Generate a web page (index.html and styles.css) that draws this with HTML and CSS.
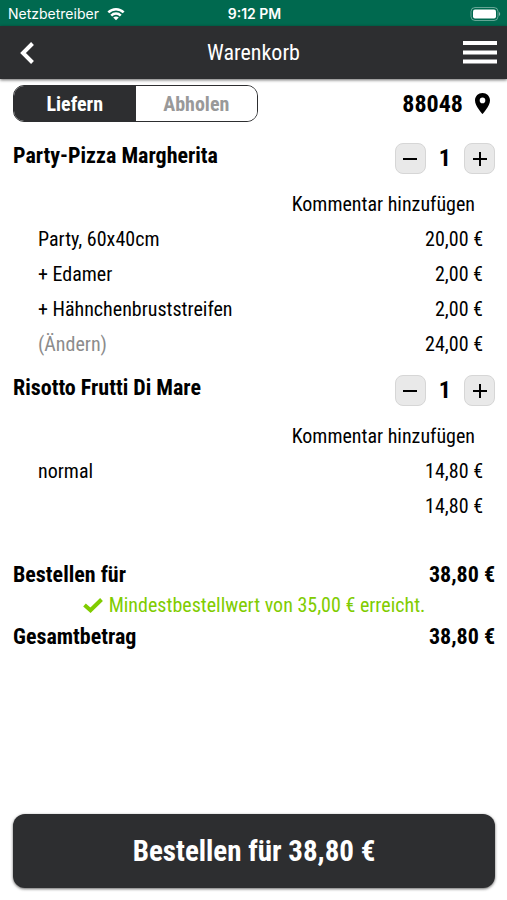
FILE: index.html
```html
<!DOCTYPE html>
<html lang="de">
<head>
    <meta charset="UTF-8">
    <meta name="viewport" content="width=device-width, initial-scale=1.0">
    <title>Warenkorb</title>
    <link rel="stylesheet" href="styles.css">
</head>
<body>
    <div class="statusbar">
        <div class="carrier">
            <span>Netzbetreiber</span>
            <svg width="18" height="14" viewBox="0 0 20 14" fill="none" stroke="#fff" stroke-width="2.8">
                <path d="M1.5 5.2C6.2.4 13.8.4 18.5 5.2"/>
                <path d="M4.7 8.8C7.6 5.8 12.4 5.8 15.3 8.8"/>
                <path d="M10 14L6.900 11C8.700 9.400 11.300 9.400 13.100 11Z" fill="#fff" stroke="none"/>
            </svg>
        </div>
        <span class="clock">9:12 PM</span>
        <div class="battery">
            <svg width="31" height="14" viewBox="0 0 31 14">
                <rect x="1" y="0.5" width="27" height="13" rx="4" fill="none" stroke="#fff" stroke-opacity="0.4"/>
                <rect x="3" y="2.5" width="23" height="9" rx="2" fill="#fff"/>
                <path d="M29 5v4c1.6-.6 1.6-3.4 0-4z" fill="#fff" fill-opacity="0.5"/>
            </svg>
        </div>
    </div>

    <header class="header">
        <button class="icon-btn back" type="button" aria-label="Zurück">
            <svg width="16" height="22" viewBox="0 0 16 22" fill="none" stroke="#fff" stroke-width="4">
                <path d="M13.5 1.5L4 11L13.5 20.5"/>
            </svg>
        </button>
        <h1>Warenkorb</h1>
        <button class="icon-btn menu" type="button" aria-label="Menü">
            <svg width="34" height="23" viewBox="0 0 34 23" fill="#fff">
                <path d="M0 0h34v4H0zM0 9.500h34v4H0zM0 18.500h34v4H0z"/>
            </svg>
        </button>
    </header>

    <main class="cart">
        <div class="delivery">
            <div class="toggle">
                <button class="toggle-btn active" type="button">Liefern</button>
                <button class="toggle-btn" type="button">Abholen</button>
            </div>
            <a class="zip" href="#">
                88048
                <svg width="15" height="21" viewBox="0 0 15 21">
                    <path fill-rule="evenodd" d="M7.500 0C3.300 0 0 3.200 0 7.400C0 12.800 7.500 21 7.500 21S15 12.800 15 7.400C15 3.200 11.700 0 7.500 0ZM7.500 4.600A2.800 2.800 0 1 1 7.500 10.200A2.800 2.800 0 1 1 7.500 4.600Z"/>
                </svg>
            </a>
        </div>

        <section class="item">
            <div class="item-head">
                <h2>Party-Pizza Margherita</h2>
                <div class="stepper">
                    <button class="step" type="button" aria-label="Weniger">
                        <svg width="14" height="14" viewBox="0 0 14 14"><path d="M0 6h14v2H0z"/></svg>
                    </button>
                    <span>1</span>
                    <button class="step" type="button" aria-label="Mehr">
                        <svg width="14" height="14" viewBox="0 0 14 14"><path d="M0 6h6V0h2v6h6v2H8v6H6V8H0z"/></svg>
                    </button>
                </div>
            </div>
            <a class="comment" href="#">Kommentar hinzufügen</a>
            <table class="lines">
                <tr><td>Party, 60x40cm</td><td class="price">20,00 €</td></tr>
                <tr><td>+ Edamer</td><td class="price">2,00 €</td></tr>
                <tr><td>+ Hähnchenbruststreifen</td><td class="price">2,00 €</td></tr>
                <tr><td><a class="change" href="#">(Ändern)</a></td><td class="price">24,00 €</td></tr>
            </table>
        </section>

        <section class="item">
            <div class="item-head">
                <h2>Risotto Frutti Di Mare</h2>
                <div class="stepper">
                    <button class="step" type="button" aria-label="Weniger">
                        <svg width="14" height="14" viewBox="0 0 14 14"><path d="M0 6h14v2H0z"/></svg>
                    </button>
                    <span>1</span>
                    <button class="step" type="button" aria-label="Mehr">
                        <svg width="14" height="14" viewBox="0 0 14 14"><path d="M0 6h6V0h2v6h6v2H8v6H6V8H0z"/></svg>
                    </button>
                </div>
            </div>
            <a class="comment" href="#">Kommentar hinzufügen</a>
            <table class="lines">
                <tr><td>normal</td><td class="price">14,80 €</td></tr>
                <tr><td></td><td class="price">14,80 €</td></tr>
            </table>
        </section>

        <section class="totals">
            <div class="total"><span>Bestellen für</span><span>38,80 €</span></div>
            <p class="minimum">
                <svg width="20" height="15" viewBox="0 0 20 15" fill="none" stroke="#80cc00" stroke-width="4">
                    <path d="M1.500 7L7.500 12.200L18.500 1.500"/>
                </svg>
                Mindestbestellwert von 35,00 € erreicht.
            </p>
            <div class="total"><span>Gesamtbetrag</span><span>38,80 €</span></div>
        </section>

        <button class="order" type="button">Bestellen für 38,80 €</button>
    </main>
</body>
</html>
```
FILE: styles.css
```css
* {
    box-sizing: border-box;
}
body {
    margin: 0;
    min-height: 100vh;
    display: flex;
    flex-direction: column;
    background: #fff;
    color: #000;
    font-family: "Roboto Condensed", Roboto, sans-serif;
    font-size: 20px;
}
h1, h2, p {
    margin: 0;
}
a {
    color: inherit;
    text-decoration: none;
}
button {
    font-family: inherit;
    cursor: pointer;
}
svg {
    display: block;
}
.statusbar {
    display: grid;
    grid-template-columns: 1fr auto 1fr;
    align-items: center;
    height: 26px;
    padding: 1px 6px 0 8px;
    background: #00694f;
    color: #fff;
    font-family: Inter, sans-serif;
    font-size: 14px;
}
.carrier {
    display: flex;
    align-items: center;
    gap: 8px;
}
.clock {
    font-weight: 600;
}
.battery {
    justify-self: end;
}
.header {
    display: grid;
    grid-template-columns: 1fr auto 1fr;
    align-items: center;
    height: 53px;
    padding: 0 10px;
    background: #2d2e30;
    color: #fff;
    box-shadow: 0 1px 3px rgba(0,0,0,0.6);
}
.header h1 {
    font-size: 22px;
    font-weight: 400;
}
.icon-btn {
    padding: 0;
    border: none;
    background: none;
}
.back {
    justify-self: start;
    padding-left: 9px;
}
.menu {
    justify-self: end;
}
.cart {
    flex: 1;
    display: flex;
    flex-direction: column;
    padding: 6px 12px 12px 13px;
}
.delivery {
    display: flex;
    justify-content: space-between;
    align-items: center;
    margin-bottom: 8px;
}
.toggle {
    display: flex;
    width: 245px;
    height: 37px;
    border: 1px solid #2d2e30;
    border-radius: 11px;
    overflow: hidden;
}
.toggle-btn {
    flex: 1;
    padding: 0;
    border: none;
    background: #fff;
    color: #999;
    font-size: 20px;
    font-weight: 700;
}
.toggle-btn.active {
    background: #2d2e30;
    color: #fff;
}
.zip {
    display: flex;
    align-items: center;
    gap: 12px;
    padding-right: 5px;
    font-size: 24px;
    font-weight: 700;
}
.item-head {
    display: flex;
    justify-content: space-between;
    align-items: flex-start;
    height: 57px;
    padding-top: 13px;
}
.item-head h2 {
    font-size: 22px;
    font-weight: 700;
    line-height: 26px;
}
.stepper {
    display: flex;
    align-items: center;
    gap: 13px;
    font-size: 24px;
    font-weight: 700;
    line-height: 31px;
}
.step {
    display: flex;
    align-items: center;
    justify-content: center;
    width: 31px;
    height: 31px;
    padding: 0;
    border: 1px solid #d6d6d6;
    border-radius: 8px;
    background: #e9e9e9;
}
.comment {
    display: block;
    padding-right: 20px;
    line-height: 35px;
    text-align: right;
}
.lines {
    width: 100%;
    border-collapse: collapse;
}
.lines td {
    height: 35px;
    padding: 0 12px 0 25px;
    line-height: 35px;
}
.lines .price {
    text-align: right;
}
.change {
    color: #8c8c8c;
}
.totals {
    margin: 35px 0 24px;
    line-height: 31px;
}
.total {
    display: flex;
    justify-content: space-between;
    font-size: 22px;
    font-weight: 700;
}
.minimum {
    display: flex;
    align-items: center;
    justify-content: center;
    gap: 6px;
    color: #80cc00;
}
.order {
    height: 74px;
    margin-top: auto;
    border: none;
    border-radius: 12px;
    background: #2d2e30;
    color: #fff;
    font-size: 29px;
    font-weight: 700;
    box-shadow: 0 1px 3px rgba(0,0,0,0.6);
}
```
